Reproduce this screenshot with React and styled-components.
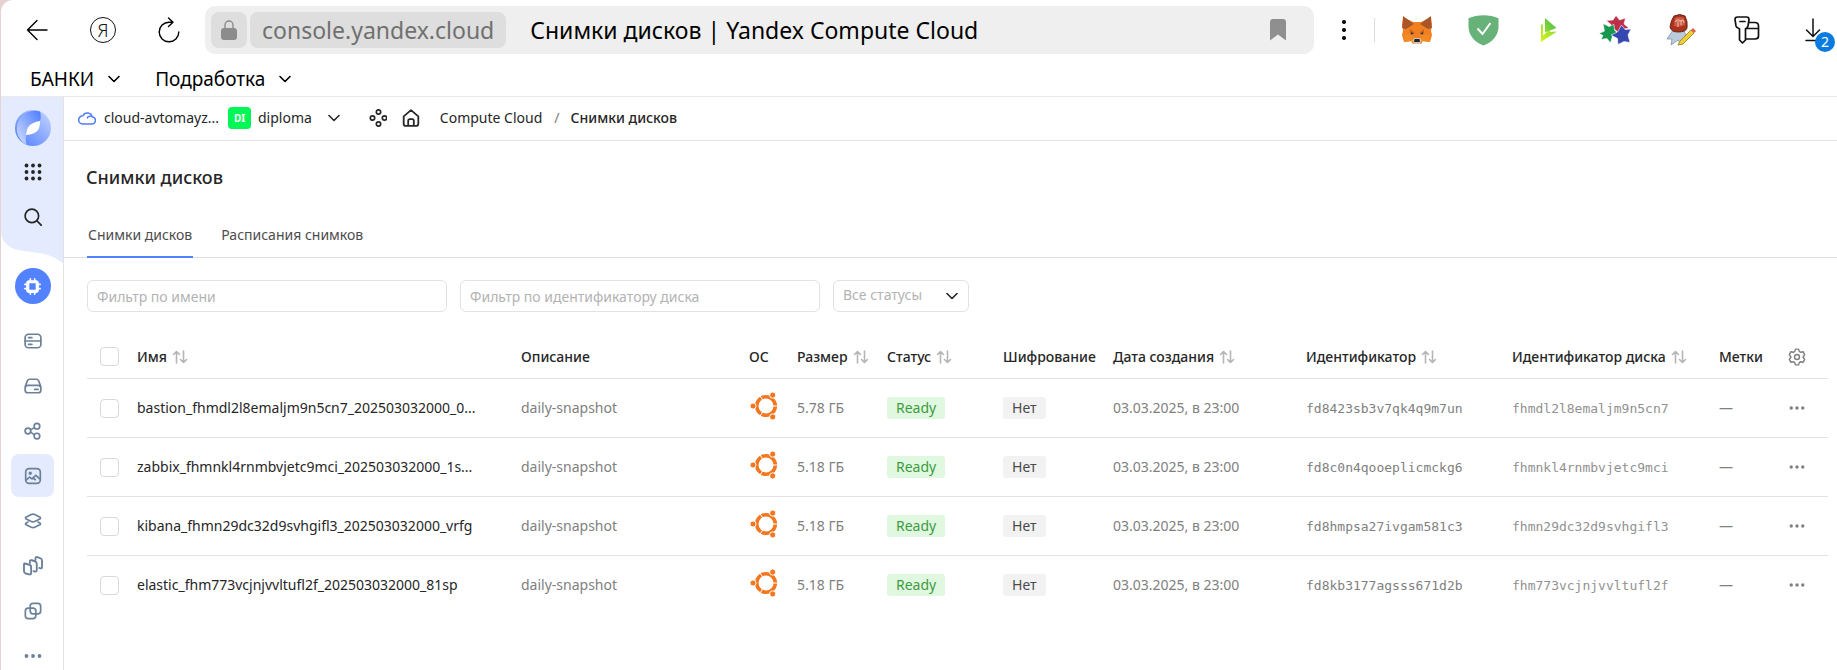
import React from "react";
import styled, { createGlobalStyle, css } from "styled-components";

const GlobalStyle = createGlobalStyle`
  *, *::before, *::after { box-sizing: border-box; }
  body { margin: 0; background: #e6d2d2; }
  button, input, select { font: inherit; color: inherit; }
`;

const colors = {
  text: "#262626",
  muted: "#808080",
  hint: "#b3b3b3",
  line: "#e2e2e2",
  blue: "#5282ff",
  pale: "#e4ebfe",
  steel: "#6b8199",
};

const Shell = styled.div`
  display: flex;
  flex-direction: column;
  height: 100vh;
  margin-left: 1px;
  background: #fff;
  border-top-left-radius: 12px;
  overflow: hidden;
  color: ${colors.text};
  font-family: "Noto Sans", "Open Sans", sans-serif;
  font-size: 14px;
  line-height: 20px;
`;

const IconButton = styled.button`
  display: flex;
  align-items: center;
  justify-content: center;
  flex: none;
  width: ${(p) => p.$width || 48}px;
  height: ${(p) => p.$height || 48}px;
  padding: 0;
  border: 0;
  background: none;
  cursor: pointer;
  position: relative;
`;

/* Browser chrome */

const BrowserBar = styled.header`
  display: flex;
  align-items: center;
  flex: none;
  height: 60px;
  padding-left: 12px;
`;

const BrowserGroup = styled.div`
  display: flex;
  gap: 18px;
`;

const YaMark = styled.span`
  display: flex;
  align-items: center;
  justify-content: center;
  width: 26px;
  height: 26px;
  border: 1px solid #111;
  border-radius: 50%;
  color: #111;
  font-size: 18px;
  font-weight: 300;
`;

const AddressBar = styled.div`
  display: flex;
  align-items: center;
  gap: 3px;
  flex: 1;
  min-width: 0;
  height: 48px;
  margin: 0 6px 0 12px;
  padding: 0 22px 0 6px;
  border-radius: 10px;
  background: #efefef;
  color: #000;
  font-size: 23px;
  line-height: 36px;
  white-space: nowrap;
`;

const AddressTile = styled.span`
  display: flex;
  align-items: center;
  justify-content: center;
  height: 36px;
  padding: 0 ${(p) => p.$pad}px;
  border-radius: 8px;
  background: #dedede;
  color: #707070;
`;

const PageTitle = styled.span`
  flex: 1;
  padding-left: 21px;
  overflow: hidden;
`;

const BarDivider = styled.span`
  width: 1px;
  height: 24px;
  margin: 0 18px 0 6px;
  background: #dcdcdc;
`;

const CountBadge = styled.span`
  position: absolute;
  right: 2px;
  bottom: 2px;
  width: 20px;
  height: 20px;
  border-radius: 50%;
  background: #0a7ce0;
  color: #fff;
  font-size: 14px;
  line-height: 20px;
  text-align: center;
`;

const Bookmarks = styled.nav`
  display: flex;
  gap: 35px;
  flex: none;
  height: 37px;
  padding: 1px 0 0 29px;
  border-bottom: 1px solid #eaeaea;
`;

const Bookmark = styled.button`
  display: flex;
  align-items: center;
  gap: 14px;
  height: 36px;
  padding: 0;
  border: 0;
  background: none;
  color: #000;
  font-size: 19px;
  cursor: pointer;
`;

/* Console */

const Console = styled.div`
  display: flex;
  flex: 1;
  min-height: 0;
`;

const Sidebar = styled.aside`
  position: relative;
  isolation: isolate;
  display: flex;
  flex-direction: column;
  align-items: center;
  flex: none;
  width: 63px;
  padding: 13px 0 0 1px;
  border-right: 1px solid ${colors.line};
  overflow: hidden;
`;

const Wave = styled.svg`
  position: absolute;
  top: 0;
  left: 0;
  z-index: -1;
`;

const SideTop = styled.div`
  display: flex;
  flex-direction: column;
  align-items: center;
  gap: 4px;
  margin-bottom: 30px;
`;

const SideList = styled.nav`
  display: flex;
  flex-direction: column;
  align-items: center;
  gap: 2px;
  color: ${(p) => (p.$dark ? colors.text : colors.steel)};
`;

const SideItem = styled(IconButton).attrs({ $width: 43, $height: 43 })`
  border-radius: 8px;
  ${(p) =>
    p.$active &&
    css`
      background: ${colors.pale};
    `}
`;

const ServiceButton = styled(IconButton).attrs({ $width: 36, $height: 36 })`
  margin-bottom: 15px;
  border-radius: 50%;
  background: ${colors.blue};
  color: #fff;
`;

const Main = styled.div`
  flex: 1;
  min-width: 0;
  overflow: auto;
`;

const TopNav = styled.nav`
  display: flex;
  align-items: center;
  height: 44px;
  padding: 0 14px 2px;
  border-bottom: 1px solid ${colors.line};
`;

const CrumbLink = styled.a`
  display: flex;
  align-items: center;
  gap: ${(p) => p.$gap || 0}px;
  margin-right: ${(p) => p.$after || 0}px;
  color: ${colors.text};
  text-decoration: none;
  white-space: nowrap;
`;

const FolderBadge = styled.span`
  width: 23px;
  height: 22px;
  border-radius: 4px;
  background: #00f756;
  color: #fff;
  font-size: 10px;
  font-weight: 700;
  line-height: 22px;
  text-align: center;
`;

const Slash = styled.span`
  margin-right: 11px;
  color: ${colors.muted};
`;

const CurrentCrumb = styled.span`
  font-weight: 500;
`;

const Heading = styled.h1`
  margin: 0;
  padding: 24px 22px 23px;
  font-size: 18px;
  font-weight: 500;
  line-height: 24px;
`;

const Tabs = styled.div`
  display: flex;
  gap: 27px;
  padding: 0 23px;
  box-shadow: inset 0 -1px ${colors.line};
`;

const Tab = styled.button`
  height: 46px;
  padding: 2px 1px 0;
  border: 0;
  border-bottom: 2px solid ${(p) => (p.$active ? colors.blue : "transparent")};
  background: none;
  color: #4d4d4d;
  cursor: pointer;
`;

const Content = styled.main`
  padding: 22px 9px 22px 23px;
`;

const Filters = styled.form`
  display: flex;
  gap: 13px;
  margin-bottom: 23px;
`;

const fieldStyle = css`
  height: 32px;
  padding: 0 9px;
  border: 1px solid ${colors.line};
  border-radius: 6px;
  background: #fff;
  outline: none;
`;

const FilterInput = styled.input`
  ${fieldStyle}
  width: 360px;
  &::placeholder {
    color: ${colors.hint};
    opacity: 1;
  }
`;

const SelectWrap = styled.div`
  position: relative;
  display: flex;
`;

const StatusSelect = styled.select`
  ${fieldStyle}
  width: 136px;
  padding-bottom: 2px;
  appearance: none;
  color: ${colors.hint};
`;

const SelectArrow = styled.span`
  position: absolute;
  top: 0;
  right: 11px;
  height: 100%;
  display: flex;
  align-items: center;
  pointer-events: none;
`;

const Table = styled.table`
  width: 100%;
  table-layout: fixed;
  border-collapse: separate;
  border-spacing: 0;
`;

const Th = styled.th`
  height: 44px;
  padding: 0 0 0 8px;
  border-bottom: 1px solid ${colors.line};
  font-weight: 500;
  text-align: left;
  white-space: nowrap;
`;

const SortButton = styled.button`
  display: flex;
  align-items: center;
  gap: 5px;
  padding: 0;
  border: 0;
  background: none;
  cursor: pointer;
`;

const Td = styled.td`
  height: 59px;
  padding: 0 0 0 8px;
  border-bottom: 1px solid ${colors.line};
  color: ${(p) => p.$color || colors.muted};
  white-space: nowrap;
  tr:last-child > & {
    height: 58px;
    border-bottom: 0;
  }
`;

const CheckCell = styled.div`
  display: flex;
  padding-left: 5px;
`;

const Checkbox = styled.input.attrs({ type: "checkbox" })`
  appearance: none;
  width: 19px;
  height: 19px;
  margin: 0;
  border: 1px solid #d9d9d9;
  border-radius: 4px;
  background: #fff;
`;

const NameLink = styled.a`
  display: block;
  overflow: hidden;
  color: ${colors.text};
  text-decoration: none;
`;

const OsLogo = styled.svg`
  display: block;
  margin: 0 0 4px 1px;
`;

const Label = styled.span`
  display: inline-block;
  padding: 0 9px;
  border-radius: 3px;
  line-height: 22px;
  background: ${(p) => (p.$ready ? "#e0f7e0" : "#f2f2f2")};
  color: ${(p) => (p.$ready ? "#3f9b3f" : "#4a4a4a")};
`;

const Code = styled.span`
  font-family: "DejaVu Sans Mono", "Liberation Mono", monospace;
  font-size: 13px;
`;

const line = { fill: "none", stroke: "currentColor", strokeLinecap: "round", strokeLinejoin: "round" };

function Icon({ size = 18, box = 16, w = 1.5, children, ...rest }) {
  return (
    <svg width={size} height={size} viewBox={`0 0 ${box} ${box}`} {...line} strokeWidth={w} aria-hidden="true" {...rest}>
      {children}
    </svg>
  );
}

const Chevron = () => (
  <svg width="12" height="8" viewBox="0 0 12 8" {...line} strokeWidth="1.6" aria-hidden="true">
    <path d="M1 1.5 6 6.5 11 1.5" />
  </svg>
);

const SortIcon = () => (
  <svg width="16" height="14" viewBox="0 0 16 14" {...line} stroke="#b5b5b5" strokeWidth="1.6" aria-hidden="true">
    <path d="M4.5 13V1.5M1.5 4.5l3-3 3 3M11.5 1v11.5M8.5 9.5l3 3 3-3" />
  </svg>
);

const Dots = ({ width = 18 }) => (
  <svg width={width} height="6" viewBox="0 0 18 6" fill="currentColor" aria-hidden="true">
    <circle cx="2.5" cy="3" r="1.9" />
    <circle cx="9" cy="3" r="1.9" />
    <circle cx="15.5" cy="3" r="1.9" />
  </svg>
);

const UbuntuIcon = () => (
  <OsLogo width="28" height="28" viewBox="0 0 28 28" role="img" aria-label="Ubuntu">
    <circle cx="16" cy="14" r="9.3" fill="none" stroke="#f4761f" strokeWidth="3.6" />
    <g stroke="#fff" strokeWidth="1">
      <path d="M22 14h6M13 19.2 10 24.4M13 8.8 10 3.6" />
    </g>
    <g fill="#f4761f" stroke="#fff" strokeWidth="1">
      <circle cx="3" cy="14" r="3.1" />
      <circle cx="22.7" cy="3.1" r="3.1" />
      <circle cx="22.7" cy="24.900" r="3.1" />
    </g>
  </OsLogo>
);

const FoxIcon = () => (
  <svg width="30" height="28" viewBox="0 0 30 28" aria-hidden="true">
    <path d="M1 1 11 6h8L29 1l1 7-1 7 1 4-2 7-7-1-2 3h-8l-2-3-7 1-2-7 1-4-1-7z" fill="#f08021" />
    <path d="M1 0 12 8 4 13 0 12 1 6zM29 0 18 8l8 5 4-1-1-6z" fill="#a8562a" />
    <path d="M8 13l5 4-5 1zM22 13l-5 4 5 1z" fill="#c9641f" />
    <path d="M9 16l3 2-3 .5zM21 16l-3 2 3 .5z" fill="#2f3b4a" />
    <path d="M10 24l2-2h6l2 2-2 4h-6z" fill="#d6c3b3" />
    <path d="M12.5 23h5l.5 3h-6z" fill="#20242a" />
    <path d="M2 19h8l2 3-2 3-7 1zM28 19h-8l-2 3 2 3 7 1z" fill="#f58a25" />
  </svg>
);

const ShieldIcon = () => (
  <svg width="31" height="31" viewBox="0 0 31 31" aria-hidden="true">
    <path d="M15.5.3C10 .3 5 1.4.5 3.3v8C.5 20 6 27 15.5 30.5 25 27 30.5 20 30.5 11.3v-8C26 1.4 21 .3 15.5.3z" fill="#67b279" />
    <path d="m9.5 13.500 5 5.500 8-11" fill="none" stroke="#fff" strokeWidth="2" />
  </svg>
);

const PlayIcon = () => (
  <svg width="18" height="26" viewBox="0 0 18 26" aria-hidden="true">
    <defs>
      <linearGradient id="play-top" x1="0" y1="1" x2="1" y2="0">
        <stop offset="0" stopColor="#8fd93a" />
        <stop offset="1" stopColor="#43bd3f" />
      </linearGradient>
      <linearGradient id="play-fill" x1="0" y1="1" x2="1" y2="0">
        <stop offset="0" stopColor="#d6f51a" />
        <stop offset="1" stopColor="#7ed337" />
      </linearGradient>
    </defs>
    <path d="M5 1 16.5 11 5 15.500z" fill="url(#play-top)" />
    <path d="M1 7l2 1v10.500l7-6L10 15l7-.5L1 25z" fill="url(#play-fill)" />
  </svg>
);

const StarsIcon = () => (
  <svg width="32" height="30" viewBox="0 0 32 30" aria-hidden="true" stroke="#fff" strokeWidth=".6" strokeLinejoin="round">
    <path d="M17 .500 20.500 5 26.500 3 25 9l5 4-7 1.500-2 5-5-5-6 1 2-6-5-4 7-.5z" fill="#be3049" />
    <path d="M0 18.500 5.500 16 4 8.500l6 3 5-2 .5 5.500 4 4-6 2L11.500 28 8 23.500l-6 1 2-4z" fill="#16994f" />
    <path d="M22.500 10 26 14.500 32 14l-3 6 2 7.500-6-1-6 3-.5-6L12 20l6.500-3z" fill="#3547b0" />
  </svg>
);

const SealIcon = () => (
  <svg width="30" height="32" viewBox="0 0 30 32" aria-hidden="true">
    <path d="M7 16 1 25l5 0-1 6 7-5 3 4 6-5-3-9z" fill="#bccbdc" stroke="#8095ad" strokeWidth=".8" />
    <path d="M8 2q6-3 11 0 3 5 2 12-1 4-9 4-7 0-8-5 1-7 4-11z" fill="#a9331d" stroke="#61200f" strokeWidth=".9" />
    <path d="M9 4q5-2 9 0l1 7q-6 3-11 1z" fill="#cd5c45" />
    <path d="M9 8q3-4 5-1 4-2 4 2M12 7v6M15 7v4" fill="none" stroke="#edb5a5" strokeWidth="1.1" />
    <path d="M14 27 25 16l3 3-11 11-5 1z" fill="#f2ce36" stroke="#8f761d" strokeWidth=".8" />
    <path d="m25 16 2-2 3 3-2 2z" fill="#e2604f" />
  </svg>
);

const KeyIcon = () => (
  <Icon size={30} box={30} w={1.7} stroke="#111">
    <path d="M5.5 2h9Q17 2 17 4.500L16 11q-.4 2-2.500 2.800V25L10.500 28 7.500 25V13.800Q4.500 13 4 11L3 4.500Q3 2 5.500 2zM8 6.500h5M17 7.500h6q3.500 0 3.500 3.500v10q0 3-3.500 3h-9.500M15 13.500h11.500" />
  </Icon>
);

const LogoIcon = () => (
  <svg width="36" height="36" viewBox="0 0 36 36" aria-hidden="true">
    <defs>
      <linearGradient id="logo-left" x1="0" y1="1" x2="1" y2="0">
        <stop offset="0" stopColor="#d5e0ff" />
        <stop offset="1" stopColor="#4b7bff" />
      </linearGradient>
      <linearGradient id="logo-right" x1="0" y1="1" x2="1" y2="0">
        <stop offset="0" stopColor="#4b7bff" />
        <stop offset="1" stopColor="#c8d7ff" />
      </linearGradient>
    </defs>
    <circle cx="18" cy="18" r="18" fill="url(#logo-right)" />
    <path d="M25 1.500A18 18 0 0 0 11.500 34.700Q10 30 11.500 24 12 15 25 11 26.500 6 25 1.500z" fill="url(#logo-left)" />
    <path d="M11 25c1-8 3-12 14-14 0 8-2 13-14 14z" fill="#fff" />
  </svg>
);

const sideIcons = [
  ["Виртуальные машины", <><rect x="1" y="2" width="14" height="12" rx="3" /><path d="M1 8h14M4 5h3M4 11h3" /></>],
  ["Диски", <><path d="M1.2 8 3 3.500Q3.500 2 5 2h6q1.500 0 2 1.500L14.800 8" /><rect x="1" y="7.500" width="14" height="6.500" rx="2.500" /><path d="M9.500 11h3" /></>],
  ["Файловые хранилища", <><circle cx="3.500" cy="8" r="2.500" /><circle cx="11.500" cy="3.700" r="2.500" /><circle cx="11.500" cy="12.500" r="2.500" /><path d="m5.800 7 3.400-2M5.800 9l3.400 2.200" /></>],
  ["Снимки дисков", <><rect x="1.500" y="1.500" width="13" height="13" rx="3" /><path d="m2 11.500 3-2.500 2 1.500 3.500-3L14 10.500M8 9.800l2 1.500" /><circle cx="5.500" cy="5.500" r="1" fill="currentColor" strokeWidth="1" /></>],
  ["Образы", <><path d="M2 4.500 6.500 2.300q1.500-.7 3 0L14 4.500q1.300.8 0 1.700l-4.500 2.300q-1.500.7-3 0L2 6.200q-1.300-.9 0-1.700zM2 9.700q-1.300.9 0 1.700l4.500 2.200q1.500.7 3 0L14 11.400q1.300-.8 0-1.700l-1.500-.8M2 9.700l1.500-.8" /></>],
  ["Группы виртуальных машин", <><path d="M1.500 6 5 7q1.500.3 1.500 2v4.500q0 1.600-1.500 1.200L2 14Q.8 13.500.8 12V7q0-1.300.7-1zM5.500 5.500V4.500q0-1.500 1.500-1.100l2.500.8q1.500.4 1.500 2v5q0 1.500-1.500 1.200l-1-.3M10 3V2q0-1.500 1.500-1.100l2.200.8q1.500.4 1.500 2v5q0 1.500-1.500 1.100L13 9.500" /></>],
  ["Группы размещения", <><rect x="1.200" y="5.500" width="9.300" height="9.300" rx="2.500" /><rect x="5.500" y="1.200" width="9.300" height="9.300" rx="2.500" /></>],
];

const rows = [
  ["bastion_fhmdl2l8emaljm9n5cn7_202503032000_0...", "5.78 ГБ", "fd8423sb3v7qk4q9m7un", "fhmdl2l8emaljm9n5cn7"],
  ["zabbix_fhmnkl4rnmbvjetc9mci_202503032000_1s...", "5.18 ГБ", "fd8c0n4qooeplicmckg6", "fhmnkl4rnmbvjetc9mci"],
  ["kibana_fhmn29dc32d9svhgifl3_202503032000_vrfg", "5.18 ГБ", "fd8hmpsa27ivgam581c3", "fhmn29dc32d9svhgifl3"],
  ["elastic_fhm773vcjnjvvltufl2f_202503032000_81sp", "5.18 ГБ", "fd8kb3177agsss671d2b", "fhm773vcjnjvvltufl2f"],
];

const columns = [
  ["Имя", null, true],
  ["Описание", 228],
  ["ОС", 48],
  ["Размер", 90, true],
  ["Статус", 116, true],
  ["Шифрование", 110],
  ["Дата создания", 193, true],
  ["Идентификатор", 206, true],
  ["Идентификатор диска", 207, true],
  ["Метки", 59],
];

const ColSized = styled.col`
  width: ${(p) => (p.$w ? `${p.$w}px` : "auto")};
`;

function Browser() {
  return (
    <>
      <BrowserBar>
        <BrowserGroup>
          <IconButton aria-label="Назад">
            <Icon size={22} box={22} w={1.4} stroke="#000"><path d="M21 11H1.500M11 1.500 1.500 11l9.500 9.500" /></Icon>
          </IconButton>
          <IconButton aria-label="Яндекс"><YaMark>Я</YaMark></IconButton>
          <IconButton aria-label="Обновить">
            <Icon size={26} box={26} w={1.4} stroke="#000"><path d="M15.500 5.200H13A9.800 9.800 0 1 0 22.800 15M12.500 1l4.500 4.200-4.500 4.300" /></Icon>
          </IconButton>
        </BrowserGroup>
        <AddressBar>
          <AddressTile $pad={10}>
            <svg width="16" height="20" viewBox="0 0 16 20" aria-hidden="true">
              <path d="M4 9V5a4 4 0 0 1 8 0v4" fill="none" stroke="#8c8c8c" strokeWidth="1.4" />
              <rect y="8" width="16" height="12" rx="3" fill="#8c8c8c" />
            </svg>
          </AddressTile>
          <AddressTile $pad={12}>console.yandex.cloud</AddressTile>
          <PageTitle>Снимки дисков | Yandex Compute Cloud</PageTitle>
          <svg width="28" height="22" viewBox="0 0 28 22" aria-hidden="true">
            <path d="M6 3q0-3 3-3h10q3 0 3 3v18.500l-8-6-8 6z" fill="#8f8f8f" />
          </svg>
        </AddressBar>
        <IconButton aria-label="Меню">
          <svg width="4" height="20" viewBox="0 0 4 20" aria-hidden="true">
            <circle cx="2" cy="2" r="2" /><circle cx="2" cy="10" r="2" /><circle cx="2" cy="18" r="2" />
          </svg>
        </IconButton>
        <BarDivider />
        <BrowserGroup>
          <IconButton aria-label="MetaMask"><FoxIcon /></IconButton>
          <IconButton aria-label="AdGuard"><ShieldIcon /></IconButton>
          <IconButton aria-label="Плеер"><PlayIcon /></IconButton>
          <IconButton aria-label="Расширение"><StarsIcon /></IconButton>
          <IconButton aria-label="Подпись"><SealIcon /></IconButton>
          <IconButton aria-label="Пароли"><KeyIcon /></IconButton>
          <IconButton aria-label="Загрузки">
            <Icon size={24} box={24} w={1.5} stroke="#111"><path d="M12 1v17M5.500 12l6.500 6.500 6.500-6.500M5 22.500h14" /></Icon>
            <CountBadge>2</CountBadge>
          </IconButton>
        </BrowserGroup>
      </BrowserBar>
      <Bookmarks>
        <Bookmark>БАНКИ <Chevron /></Bookmark>
        <Bookmark>Подработка <Chevron /></Bookmark>
      </Bookmarks>
    </>
  );
}

function SideNav() {
  return (
    <Sidebar>
      <Wave width="63" height="167" viewBox="0 0 63 167" aria-hidden="true">
        <path d="M0 0H63V167Q54 160 44 157L17 153Q3 150 0 137z" fill={colors.pale} />
      </Wave>
      <SideTop>
        <LogoIcon />
        <SideList $dark>
          <SideItem aria-label="Все сервисы">
            <svg width="18" height="18" viewBox="0 0 18 18" fill="currentColor" aria-hidden="true">
              {[2.5, 9, 15.5].map((y) => [2.5, 9, 15.5].map((x) => <circle key={`${x}-${y}`} cx={x} cy={y} r="1.9" />))}
            </svg>
          </SideItem>
          <SideItem aria-label="Поиск">
            <Icon><circle cx="7" cy="7" r="6" /><path d="m11.500 11.500 4 4" /></Icon>
          </SideItem>
        </SideList>
      </SideTop>
      <ServiceButton aria-label="Compute Cloud">
        <Icon size={17} w={1.5}>
          <rect x="3.500" y="3.500" width="9" height="9" rx="1.5" strokeWidth="3" />
          <path d="M6 .8v2M10 .8v2M6 13.200v2M10 13.200v2M.8 6h2M.8 10h2M13.200 6h2M13.200 10h2" />
        </Icon>
      </ServiceButton>
      <SideList>
        {sideIcons.map(([label, art]) => (
          <SideItem key={label} aria-label={label} $active={label === "Снимки дисков"}>
            <Icon size={label === "Группы виртуальных машин" ? 20 : 18}>{art}</Icon>
          </SideItem>
        ))}
        <SideItem aria-label="Ещё"><Dots /></SideItem>
      </SideList>
    </Sidebar>
  );
}

function Breadcrumbs() {
  return (
    <TopNav aria-label="Навигация">
      <CrumbLink href="#cloud" $gap={8} $after={9}>
        <svg width="18" height="14" viewBox="0 0 18 14" {...line} stroke="#4d7cf5" strokeWidth="1.5" aria-hidden="true">
          <path d="M4.500 13h9a3.600 3.600 0 0 0 .6-7.200A4.800 4.800 0 0 0 5 4.800 4.100 4.100 0 0 0 4.500 13zM9.500 7q0-2 3-1.800" />
        </svg>
        cloud-avtomayz...
      </CrumbLink>
      <CrumbLink href="#folder" $gap={7} $after={16}>
        <FolderBadge>DI</FolderBadge>
        diploma
      </CrumbLink>
      <IconButton aria-label="Выбрать каталог" $width={12} $height={24}><Chevron /></IconButton>
      <CrumbLink href="#services" $after={15} aria-label="Сервисы">
        <svg width="47" height="18" viewBox="-30 0 47 18" {...line} strokeWidth="1.7" aria-hidden="true">
          <circle cx="8.500" cy="3" r="2.200" /><circle cx="8.500" cy="15" r="2.200" />
          <circle cx="2.500" cy="9" r="2.200" /><circle cx="14.500" cy="9" r="2.200" />
        </svg>
      </CrumbLink>
      <CrumbLink href="#home" $after={20} aria-label="Главная">
        <Icon size={18} w={1.6}><path d="M1.500 6.500 8 1l6.500 5.500V13q0 2-2 2h-9q-2 0-2-2zM5.500 15v-4.500q0-1.500 1.500-1.500h2q1.500 0 1.500 1.500V15" /></Icon>
      </CrumbLink>
      <CrumbLink href="#compute" $after={12}>Compute Cloud</CrumbLink>
      <Slash>/</Slash>
      <CurrentCrumb aria-current="page">Снимки дисков</CurrentCrumb>
    </TopNav>
  );
}

function SnapshotTable() {
  return (
    <Table>
      <colgroup>
        <ColSized $w={42} />
        {columns.map(([name, width]) => <ColSized key={name} $w={width} />)}
        <ColSized $w={58} />
      </colgroup>
      <thead>
        <tr>
          <Th><CheckCell><Checkbox aria-label="Выбрать все" /></CheckCell></Th>
          {columns.map(([name, , sortable]) => (
            <Th key={name} scope="col">
              {sortable ? <SortButton>{name} <SortIcon /></SortButton> : name}
            </Th>
          ))}
          <Th>
            <IconButton aria-label="Настройки" $width={38} $height={24}>
              <Icon size={18} w={1.3} stroke="#808080">
                <path d="M6.600 1h2.800l.6 2 1.300.8 2.100-.5 1.400 2.500L13.400 8l1.400 2.200-1.400 2.500-2.100-.5-1.300.8-.6 2H6.600L6 13l-1.300-.8-2.100.5-1.400-2.500L2.600 8 1.200 5.800l1.400-2.500 2.100.5L6 3z" />
                <circle cx="8" cy="8" r="2.200" />
              </Icon>
            </IconButton>
          </Th>
        </tr>
      </thead>
      <tbody>
        {rows.map(([name, size, id, disk]) => (
          <tr key={id}>
            <Td><CheckCell><Checkbox aria-label={name} /></CheckCell></Td>
            <Td><NameLink href={`#${id}`}>{name}</NameLink></Td>
            <Td>daily-snapshot</Td>
            <Td><UbuntuIcon /></Td>
            <Td>{size}</Td>
            <Td><Label $ready>Ready</Label></Td>
            <Td><Label>Нет</Label></Td>
            <Td>03.03.2025, в 23:00</Td>
            <Td><Code>{id}</Code></Td>
            <Td $color="#919191"><Code>{disk}</Code></Td>
            <Td>—</Td>
            <Td>
              <IconButton aria-label="Действия" $width={38} $height={24}><Dots width={16} /></IconButton>
            </Td>
          </tr>
        ))}
      </tbody>
    </Table>
  );
}

export default function App() {
  return (
    <Shell>
      <GlobalStyle />
      <Browser />
      <Console>
        <SideNav />
        <Main>
          <Breadcrumbs />
          <Heading>Снимки дисков</Heading>
          <Tabs role="tablist">
            <Tab role="tab" aria-selected="true" $active>Снимки дисков</Tab>
            <Tab role="tab" aria-selected="false">Расписания снимков</Tab>
          </Tabs>
          <Content>
            <Filters>
              <FilterInput type="text" aria-label="Фильтр по имени" placeholder="Фильтр по имени" />
              <FilterInput type="text" aria-label="Фильтр по идентификатору диска" placeholder="Фильтр по идентификатору диска" />
              <SelectWrap>
                <StatusSelect aria-label="Статус"><option>Все статусы</option></StatusSelect>
                <SelectArrow><Chevron /></SelectArrow>
              </SelectWrap>
            </Filters>
            <SnapshotTable />
          </Content>
        </Main>
      </Console>
    </Shell>
  );
}
